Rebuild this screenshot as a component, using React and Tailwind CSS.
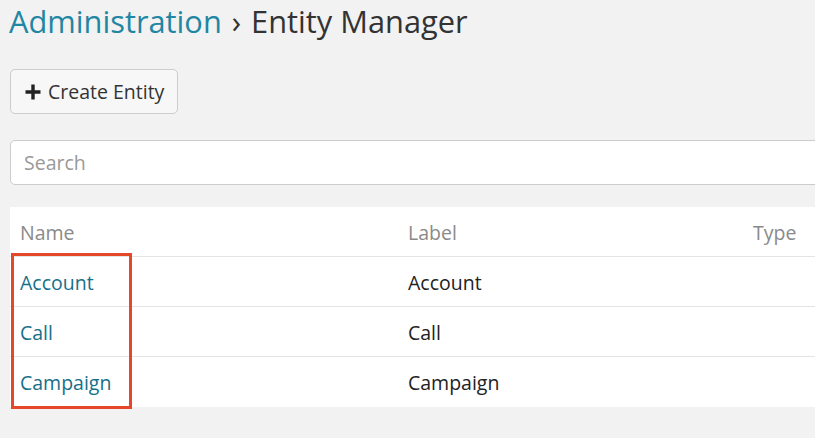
export default function App() {
  const rows = ["Account", "Call", "Campaign"];

  return (
    <div className="min-h-[438px] w-[815px] overflow-hidden bg-[#f2f2f2] font-['Open_Sans',sans-serif]">
      <div className="pl-[10px]">
        {/* заголовок */}
        <h1 className="h-[40px] text-[30.8px] leading-[42px] whitespace-nowrap text-[#333] -ml-[1px]">
          <span className="text-[#1f86a3]">Administration</span>
          <span className="mx-[10px] text-[#333]">›</span>
          Entity Manager
        </h1>

        <div className="mt-[29px]">
          <button className="flex h-[45px] items-center gap-[6px] rounded-[5px] border border-[#ccc] bg-[#f7f7f7] px-[13px] text-[19.5px] text-[#333]">
            <svg width="18" height="18" viewBox="0 0 18 18">
              <path d="M9 1.5v15M1.5 9h15" stroke="#222" strokeWidth="3.4" />
            </svg>
            Create Entity
          </button>
        </div>

        <div className="mt-[26px]">
          <input
            placeholder="Search"
            className="h-[45px] w-[900px] rounded-[5px] border border-[#ccc] bg-white px-[13px] text-[19.5px] text-[#333] placeholder-[#999] outline-none"
          />
        </div>

        <div className="relative mt-[22px] w-[900px] bg-white">
          <div className="flex h-[50px] items-center border-b border-[#e4e4e4] pt-[2px] text-[19.5px] text-[#8a8a8a]">
            <div className="w-[388px] pl-[10px]">Name</div>
            <div className="w-[345px] pl-[10px]">Label</div>
            <div className="pl-[10px]">Type</div>
          </div>
          {rows.map((r, i) => (
            <div
              key={r}
              className={`flex h-[50px] items-center pt-[2px] text-[19.5px] ${i < rows.length - 1 ? "border-b border-[#e4e4e4]" : ""}`}
            >
              <div className="w-[388px] pl-[10px] text-[#17708a]">{r}</div>
              <div className="w-[345px] pl-[10px] text-[#222]">{r}</div>
              <div />
            </div>
          ))}
          {/* выделение */}
          <div className="absolute left-[1px] top-[46px] h-[156px] w-[121px] border-[3px] border-[#e5472b]" />
        </div>
      </div>
    </div>
  );
}
